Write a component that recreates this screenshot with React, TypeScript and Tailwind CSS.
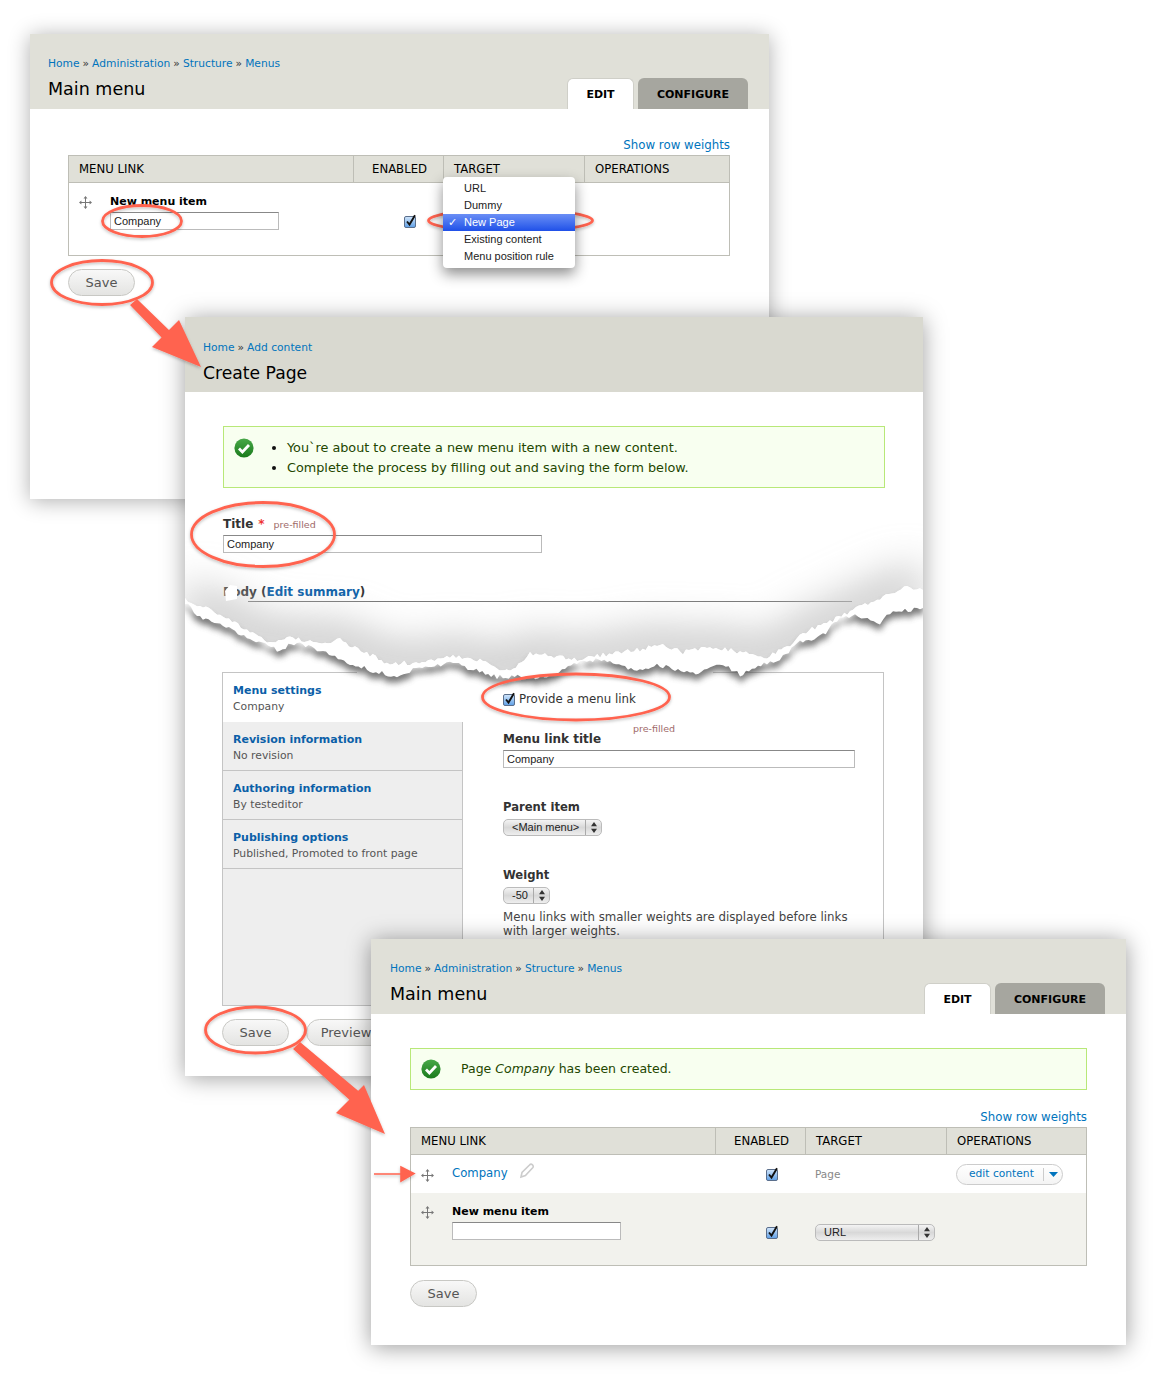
import { ReactNode } from 'react';

const CORAL = '#ff6450';

function Drag() {
  return (
    <svg width="13" height="13" viewBox="0 0 13 13" className="mt-[2px] shrink-0" fill="#777" stroke="#777" strokeWidth="1">
      <path d="M6.5 2v9M2 6.5h9" fill="none" />
      <path d="M6.5 0l2 2.4h-4zM6.5 13l2-2.4h-4zM0 6.5l2.4-2v4zM13 6.5l-2.4-2v4z" stroke="none" />
    </svg>
  );
}

function Check() {
  return (
    <svg width="13" height="14" viewBox="0 0 13 14" className="shrink-0">
      <defs>
        <linearGradient id="cb" x1="0" y1="0" x2="0" y2="1">
          <stop offset="0" stopColor="#d2e6fb" />
          <stop offset="1" stopColor="#5e9fe6" />
        </linearGradient>
      </defs>
      <rect x="0.5" y="2.5" width="11" height="11" rx="1.5" fill="url(#cb)" stroke="#5b6f8c" />
      <path d="M3 7.5l2.5 3L11 1.2" fill="none" stroke="#111" strokeWidth="1.9" />
    </svg>
  );
}

function OkIcon() {
  return (
    <svg width="20" height="20" viewBox="0 0 20 20" className="shrink-0">
      <defs>
        <linearGradient id="ok" x1="0" y1="0" x2="0" y2="1">
          <stop offset="0" stopColor="#48a848" />
          <stop offset="1" stopColor="#1a7a1c" />
        </linearGradient>
      </defs>
      <circle cx="10" cy="10" r="9.6" fill="url(#ok)" />
      <path d="M5 10.5l3.4 3.4L15 7" fill="none" stroke="#fff" strokeWidth="2.8" />
    </svg>
  );
}

function Spinner() {
  return (
    <svg width="6" height="11" viewBox="0 0 6 11" fill="#333">
      <path d="M3 0l3 4.2H0zM3 11l3-4.2H0z" />
    </svg>
  );
}

function SaveButton({ label = 'Save', className = 'w-[67px]' }: { label?: string; className?: string }) {
  return (
    <button className={`h-[27px] shrink-0 rounded-full border border-[#c8c8c4] bg-gradient-to-b from-[#f8f8f8] to-[#e4e4e2] text-[13px] text-[#555] ${className}`}>
      {label}
    </button>
  );
}

function Tabs() {
  return (
    <div className="flex gap-[4px] text-[11px] font-bold text-black">
      <div className="flex h-[31px] w-[67px] items-center justify-center rounded-t-[6px] border-x border-t border-[#cfcfc8] bg-white pt-[2px]">EDIT</div>
      <div className="flex h-[31px] w-[110px] items-center justify-center rounded-t-[6px] bg-[#a6a69f] pt-[3px]">CONFIGURE</div>
    </div>
  );
}

function Crumbs({ items }: { items: string[] }) {
  return (
    <div className="flex h-[14px] items-center gap-[3px] text-[10.7px] leading-[14px] text-[#333]">
      {items.map((item, i) => (
        <span key={item} className="flex gap-[3px]">
          {i > 0 && <span>»</span>}
          <a className="text-[#0074bd]">{item}</a>
        </span>
      ))}
    </div>
  );
}

function Message({ children, className }: { children: ReactNode; className: string }) {
  return <div className={`flex border border-[#b8e878] bg-[#f8fff0] text-[#234600] ${className}`}>{children}</div>;
}

function TextBox({ value = '', className }: { value?: string; className: string }) {
  return (
    <input
      readOnly
      value={value}
      className={`block h-[18px] border border-[#bbb] border-t-[#888] bg-white px-[3px] font-['Liberation_Sans',sans-serif] text-[11px] text-[#222] ${className}`}
    />
  );
}

function Select({ value, className, textClass }: { value: string; className: string; textClass: string }) {
  return (
    <div className={`flex items-center rounded-[5px] border border-[#bbb] bg-gradient-to-b from-[#f4f4f4] via-[#d8d8d8] to-[#eee] font-['Liberation_Sans',sans-serif] text-[11px] text-[#222] ${className}`}>
      <span className={`flex-1 ${textClass}`}>{value}</span>
      <span className="flex h-full w-[16px] items-center justify-center border-l border-[#aaa]">
        <Spinner />
      </span>
    </div>
  );
}

function TableHead({ cols, labels }: { cols: string; labels: string[] }) {
  return (
    <div className={`grid h-[27px] border-b border-[#bebeb6] bg-[#e0e0d8] text-[11.7px] text-black ${cols}`}>
      {labels.map((label, i) => (
        <div key={label} className={`flex items-center pt-[1px] ${i > 0 ? 'border-l border-[#bebeb6]' : ''} ${i === 1 ? 'pl-[18px]' : 'pl-[10px]'}`}>
          {label}
        </div>
      ))}
    </div>
  );
}

function Pulldown() {
  const rows = ['URL', 'Dummy', 'New Page', 'Existing content', 'Menu position rule'];
  return (
    <div className="absolute left-[413px] top-[143px] z-10 w-[132px] rounded-[4px] bg-white py-[3px] font-['Liberation_Sans',sans-serif] text-[11px] leading-[17px] text-[#222] shadow-[0_6px_14px_rgba(0,0,0,0.45)]">
      {rows.map((row) => (
        <div
          key={row}
          className={`relative h-[17px] pl-[21px] ${row === 'New Page' ? 'bg-gradient-to-b from-[#6b8ef5] to-[#1f4fe8] text-white' : ''}`}
        >
          {row === 'New Page' && <span className="absolute left-[5px] top-0">✓</span>}
          {row}
        </div>
      ))}
    </div>
  );
}

function WindowOne() {
  const cols = 'grid-cols-[284px_90px_141px_145px]';
  return (
    <section className="absolute left-[30px] top-[34px] h-[465px] w-[739px] bg-white shadow-[0_2px_20px_rgba(0,0,0,0.32)]">
      <header className="flex h-[75px] items-end justify-between bg-[#e0e0d8] pl-[18px] pr-[21px]">
        <div className="pb-[8px]">
          <Crumbs items={['Home', 'Administration', 'Structure', 'Menus']} />
          <h1 className="mt-[6px] text-[17.5px] leading-[24px] text-black">Main menu</h1>
        </div>
        <Tabs />
      </header>
      <div className="pl-[38px] pr-[39px] pt-[28px]">
        <div className="h-[18px] text-right text-[11.8px] leading-[16px] text-[#0074bd]">Show row weights</div>
        <div className="h-[101px] border border-[#bebeb6]">
          <TableHead cols={cols} labels={['MENU LINK', 'ENABLED', 'TARGET', 'OPERATIONS']} />
          <div className={`grid ${cols}`}>
            <div className="flex gap-[18px] pl-[10px] pt-[11px]">
              <Drag />
              <div>
                <div className="text-[11px] font-bold leading-[15px] text-black">New menu item</div>
                <TextBox value="Company" className="mt-[3px] w-[169px]" />
              </div>
            </div>
            <div className="pl-[51px] pt-[31px]">
              <Check />
            </div>
          </div>
        </div>
        <div className="mt-[13px]">
          <SaveButton />
        </div>
      </div>
      <Pulldown />
    </section>
  );
}

const UPPER: [number, number][] = [
  [185, 600], [203, 607], [223, 615], [247, 630], [270, 643], [290, 637], [313, 643], [340, 640], [367, 653], [387, 663],
  [413, 663], [453, 657], [480, 660], [497, 670], [513, 670], [530, 653], [563, 657], [580, 660], [603, 655], [637, 650],
  [660, 645], [683, 652], [713, 647], [740, 652], [767, 657], [787, 647], [803, 633], [827, 623], [853, 610], [880, 598],
  [907, 587], [923, 590],
];

const LOWER: [number, number][] = [
  [185, 603], [200, 617], [223, 625], [253, 640], [277, 650], [297, 643], [320, 650], [347, 663], [370, 670], [397, 677],
  [413, 670], [453, 663], [497, 677], [547, 677], [577, 663], [590, 660], [610, 660], [637, 672], [657, 665], [693, 673],
  [707, 670], [723, 663], [740, 675], [767, 663], [783, 657], [800, 642], [823, 635], [837, 620], [855, 615], [880, 623],
  [890, 613], [923, 608],
];

// rough paper edge: walk the outline and jitter it a little every few pixels
function jag(points: [number, number][], seed: number) {
  let s = seed;
  const rnd = () => {
    s = (s * 16807) % 2147483647;
    return s / 2147483647 - 0.5;
  };
  const out: string[] = [];
  for (let i = 0; i < points.length - 1; i++) {
    const [x0, y0] = points[i];
    const [x1, y1] = points[i + 1];
    const steps = Math.max(1, Math.round((x1 - x0) / 3));
    for (let k = 0; k < steps; k++) {
      const t = k / steps;
      out.push(`${(x0 + (x1 - x0) * t).toFixed(1)} ${(y0 + (y1 - y0) * t + rnd() * 4.5).toFixed(1)}`);
    }
  }
  const last = points[points.length - 1];
  out.push(`${last[0]} ${last[1]}`);
  return out;
}

function TornPaper() {
  const top = jag(UPPER, 4711);
  const bottom = jag(LOWER, 90210);
  const band = `M${top.join('L')}L${[...bottom].reverse().join('L')}Z`;
  const above = `M${top.join('L')}L923 500L185 500Z`;
  return (
    <svg className="pointer-events-none absolute left-0 top-[183px]" width="738" height="200" viewBox="185 500 738 200">
      <defs>
        <filter id="soft" filterUnits="userSpaceOnUse" x="85" y="400" width="938" height="400">
          <feGaussianBlur stdDeviation="20" />
        </filter>
        <filter id="drop" filterUnits="userSpaceOnUse" x="165" y="560" width="778" height="140">
          <feGaussianBlur stdDeviation="3" />
        </filter>
        <clipPath id="aboveTear">
          <path d={above} />
        </clipPath>
      </defs>
      <g clipPath="url(#aboveTear)">
        <polyline points={UPPER.map((p) => p.join(',')).join(' ')} fill="none" stroke="#c6c6c6" strokeWidth="36" filter="url(#soft)" />
      </g>
      <rect x="357" y="670" width="356" height="5" fill="#fff" />
      <path d={band} transform="translate(0 6)" fill="#555" opacity="0.78" filter="url(#drop)" />
      <path d={band} fill="#fff" />
      <path d="M225 591L230 585L237 586L237 599L226 601Z" fill="#fff" />
    </svg>
  );
}

function SideTab({ title, sub, active }: { title: string; sub: string; active?: boolean }) {
  return (
    <div className={`h-[49px] pl-[10px] pt-[10px] ${active ? 'bg-white' : 'border-r border-b border-[#c4c4c4] bg-[#eee]'}`}>
      <div className="text-[11px] font-bold leading-[16px] text-[#0b5fa8]">{title}</div>
      <div className="text-[10.8px] leading-[15px] text-[#555]">{sub}</div>
    </div>
  );
}

function WindowTwo() {
  return (
    <section className="absolute left-[185px] top-[317px] h-[759px] w-[738px] bg-white font-['DejaVu_Sans',sans-serif] shadow-[0_2px_22px_rgba(0,0,0,0.38)]">
      <header className="h-[75px] bg-[#d9d9d0] pl-[18px] pt-[24px]">
        <Crumbs items={['Home', 'Add content']} />
        <h1 className="mt-[6px] text-[17.2px] leading-[24px] text-black">Create Page</h1>
      </header>
      <div className="pl-[38px] pr-[38px] pt-[34px]">
        <Message className="h-[62px] pl-[10px] pt-[11px] text-[12.8px]">
          <OkIcon />
          <ul className="ml-[13px] list-disc pl-[20px] leading-[20px] marker:text-[#111]">
            <li>You`re about to create a new menu item with a new content.</li>
            <li>Complete the process by filling out and saving the form below.</li>
          </ul>
        </Message>
        <div className="mt-[29px] flex h-[15px] items-center text-[12px] font-bold leading-[15px] text-[#333]">
          Title
          <span className="ml-[5px] text-[#ee3333]">*</span>
          <span className="ml-[9px] text-[9.5px] font-normal text-[#a06a6a]">pre-filled</span>
        </div>
        <TextBox value="Company" className="mt-[3px] w-[319px]" />
        <div className="mt-[32px] h-[15px] text-[12px] font-bold leading-[15px] text-[#333]">
          Body (<a className="text-[#0b5fa8]">Edit summary</a>)
        </div>
        <div className="ml-[25px] mt-[1px] h-px w-[604px] bg-[#777]" />
        <div className="-ml-px mt-[70px] flex h-[334px] w-[662px] border border-[#c4c4c4]">
          <div className="flex w-[240px] flex-col">
            <SideTab active title="Menu settings" sub="Company" />
            <SideTab title="Revision information" sub="No revision" />
            <SideTab title="Authoring information" sub="By testeditor" />
            <SideTab title="Publishing options" sub="Published, Promoted to front page" />
            <div className="flex-1 border-r border-[#c4c4c4] bg-[#eee]" />
          </div>
          <div className="relative pl-[40px] text-[11.8px] text-[#333]">
            <label className="mt-[17px] flex h-[18px] items-center gap-[3px]">
              <Check />
              <span className="pt-[1px]">Provide a menu link</span>
            </label>
            <span className="absolute left-[170px] top-[49px] text-[9.5px] text-[#a06a6a]">pre-filled</span>
            <div className="mt-[24px] h-[15px] text-[12px] font-bold leading-[15px]">Menu link title</div>
            <TextBox value="Company" className="mt-[3px] w-[352px]" />
            <div className="mt-[32px] h-[15px] text-[11.6px] font-bold leading-[15px]">Parent item</div>
            <Select value="<Main menu>" className="mt-[4px] h-[17px] w-[99px]" textClass="pl-[8px]" />
            <div className="mt-[32px] h-[15px] text-[11.6px] font-bold leading-[15px]">Weight</div>
            <Select value="-50" className="mt-[4px] h-[17px] w-[47px]" textClass="pl-[8px]" />
            <p className="mt-[6px] w-[360px] leading-[14px] text-[#444]">Menu links with smaller weights are displayed before links with larger weights.</p>
          </div>
        </div>
        <div className="-ml-px mt-[13px] flex gap-[17px]">
          <SaveButton />
          <SaveButton label="Preview" className="w-[80px]" />
        </div>
      </div>
      <TornPaper />
    </section>
  );
}

function WindowThree() {
  const cols = 'grid-cols-[304px_90px_141px_140px]';
  return (
    <section className="absolute left-[371px] top-[939px] h-[406px] w-[755px] bg-white font-['DejaVu_Sans',sans-serif] shadow-[0_2px_22px_rgba(0,0,0,0.4)]">
      <header className="flex h-[75px] items-end justify-between bg-[#e0e0d8] pl-[19px] pr-[21px]">
        <div className="pb-[8px]">
          <Crumbs items={['Home', 'Administration', 'Structure', 'Menus']} />
          <h1 className="mt-[6px] text-[17.5px] leading-[24px] text-black">Main menu</h1>
        </div>
        <Tabs />
      </header>
      <div className="pl-[39px] pr-[39px] pt-[34px]">
        <Message className="h-[42px] items-center pl-[10px] text-[12.5px]">
          <OkIcon />
          <span className="ml-[20px] pt-[1px]">
            Page <em>Company</em> has been created.
          </span>
        </Message>
        <div className="mt-[19px] h-[18px] text-right text-[11.8px] leading-[16px] text-[#0074bd]">Show row weights</div>
        <div className="h-[139px] border border-[#bebeb6]">
          <TableHead cols={cols} labels={['MENU LINK', 'ENABLED', 'TARGET', 'OPERATIONS']} />
          <div className={`grid h-[38px] bg-white ${cols}`}>
            <div className="flex items-center pl-[10px]">
              <Drag />
              <a className="ml-[18px] pb-[1px] text-[11.7px] text-[#0074bd]">Company</a>
              <svg width="16" height="16" viewBox="0 0 16 16" className="mb-[6px] ml-[11px]" fill="none" stroke="#ccc" strokeWidth="1.6">
                <path d="M2 14l1-4.5L10.5 2a2 2 0 0 1 3.2 2.8L6.4 12.6z" />
              </svg>
            </div>
            <div className="pl-[51px] pt-[12px]">
              <Check />
            </div>
            <div className="flex items-center pl-[10px] pt-[1px] text-[10.5px] text-[#888]">Page</div>
            <div className="flex items-center pl-[10px]">
              <div className="flex h-[21px] w-[107px] items-center rounded-full border border-[#ccc] bg-gradient-to-b from-white to-[#f4f4f4] pl-[12px] text-[10.7px] text-[#0074bd]">
                <span>edit content</span>
                <span className="ml-auto flex h-[13px] w-[19px] items-center justify-center border-l border-[#ccc]">
                  <svg width="9" height="5" viewBox="0 0 9 5" fill="#0074bd">
                    <path d="M0 0h9L4.5 5z" />
                  </svg>
                </span>
              </div>
            </div>
          </div>
          <div className={`grid h-[72px] bg-[#f2f2ed] ${cols}`}>
            <div className="flex gap-[18px] pl-[10px] pt-[11px]">
              <Drag />
              <div>
                <div className="text-[11px] font-bold leading-[15px] text-black">New menu item</div>
                <TextBox className="mt-[3px] w-[169px]" />
              </div>
            </div>
            <div className="pl-[51px] pt-[32px]">
              <Check />
            </div>
            <div className="pl-[10px] pt-[31px]">
              <Select value="URL" className="h-[17px] w-[120px]" textClass="pl-[8px]" />
            </div>
          </div>
        </div>
        <div className="mt-[14px]">
          <SaveButton />
        </div>
      </div>
    </section>
  );
}

function Marks() {
  const rings = [
    { cx: 142, cy: 221, rx: 39.5, ry: 15.5 },
    { cx: 102, cy: 282.5, rx: 50.5, ry: 22 },
    { cx: 510.5, cy: 220.5, rx: 82, ry: 11 },
    { cx: 263, cy: 534.5, rx: 71.5, ry: 32 },
    { cx: 576, cy: 697, rx: 93.5, ry: 23 },
    { cx: 255.5, cy: 1030, rx: 50, ry: 23 },
  ];
  return (
    <svg className="pointer-events-none absolute inset-0" width="1163" height="1383" viewBox="0 0 1163 1383">
      <defs>
        <filter id="ringShade" x="-20%" y="-40%" width="140%" height="190%">
          <feDropShadow dx="0" dy="1.5" stdDeviation="1.5" floodColor="#000" floodOpacity="0.25" />
        </filter>
      </defs>
      <g filter="url(#ringShade)">
        {rings.map((r) => (
          <ellipse key={r.cy} {...r} fill="none" stroke={CORAL} strokeWidth="2.8" />
        ))}
        <path d="M130 305l7-6 34 33-8 7zM179 320l22 47-49-20z" fill={CORAL} />
        <path d="M293 1049l7-7 62 52-9 9zM364 1085l21 49-49-21z" fill={CORAL} />
        <path d="M374 1174h28M401 1167l13 6.5-13 7.5z" fill={CORAL} stroke={CORAL} strokeWidth="1.6" />
      </g>
    </svg>
  );
}

export default function App() {
  return (
    <div className="relative h-[1383px] w-[1163px] overflow-hidden bg-white font-['DejaVu_Sans',sans-serif]">
      <WindowOne />
      <WindowTwo />
      <WindowThree />
      <Marks />
    </div>
  );
}
